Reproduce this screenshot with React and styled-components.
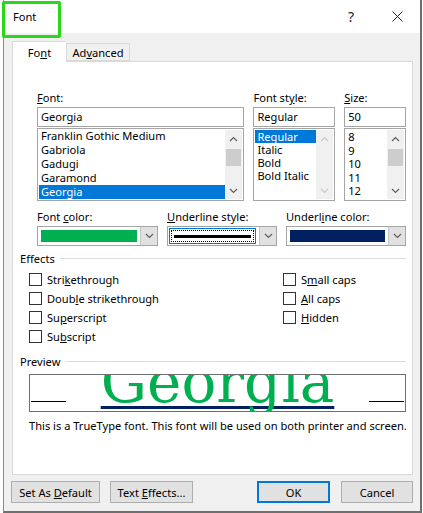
import React from 'react';
import styled, { createGlobalStyle } from 'styled-components';

const GlobalStyle = createGlobalStyle`
  html, body {
    margin: 0;
    padding: 0;
    background: #ffffff;
  }
  body {
    width: 423px;
    height: 513px;
    overflow: hidden;
    font-family: "Noto Sans", "Liberation Sans", sans-serif;
    font-size: 11.1px;
    color: #000;
  }
`;

const Window = styled.div`
  position: relative;
  margin-left: 3px;
  width: 419px;
  height: 513px;
  box-sizing: border-box;
  border-left: 1px solid #8a8a8a;
  border-right: 2px solid #6f6f6f;
  border-bottom: 2px solid #6f6f6f;
  display: flex;
  flex-direction: column;
`;

const TitleBar = styled.div`
  height: 33px;
  background: #fff;
  display: flex;
  align-items: center;
  padding-left: 9px;
`;

const TitleText = styled.div`
  flex: 1;
`;

const TitleButton = styled.div`
  width: 46px;
  height: 33px;
  display: flex;
  align-items: center;
  justify-content: center;
  font-size: 14px;
  color: #222;
`;

const Highlight = styled.div`
  position: absolute;
  left: -2px;
  top: 1px;
  width: 59px;
  height: 37px;
  box-sizing: border-box;
  border: 3px solid #2bd61b;
  border-radius: 2px;
`;

const Body = styled.div`
  flex: 1;
  background: #f0f0f0;
  padding: 8px 7px 0 8px;
  display: flex;
  flex-direction: column;
`;

const Tabs = styled.div`
  display: flex;
  align-items: flex-end;
  height: 20px;
  position: relative;
  z-index: 1;
`;

const Tab = styled.div`
  box-sizing: border-box;
  height: ${p => (p.$active ? '21px' : '18px')};
  margin-bottom: ${p => (p.$active ? '-1px' : '0')};
  width: ${p => p.$w}px;
  background: ${p => (p.$active ? '#fff' : '#f0f0f0')};
  border: 1px solid #d9d9d9;
  border-bottom: ${p => (p.$active ? 'none' : '1px solid #d9d9d9')};
  border-right: ${p => (p.$active ? 'none' : '1px solid #d9d9d9')};
  display: flex;
  align-items: center;
  justify-content: center;
`;

const Panel = styled.div`
  background: #fff;
  border: 1px solid #d9d9d9;
  height: 414px;
  box-sizing: border-box;
  padding: 29px 6px 0 7px;
  display: flex;
  flex-direction: column;
`;

const Ul = styled.span`
  text-decoration: underline;
  text-underline-offset: 1px;
`;

const FieldRow = styled.div`
  display: flex;
  gap: 9px;
  padding-left: 17px;
  margin-top: ${p => p.$top || 0}px;
`;

const Field = styled.div`
  width: ${p => p.$w}px;
  display: flex;
  flex-direction: column;
`;

const Label = styled.div`
  height: 14px;
  line-height: 14px;
  margin-bottom: 2px;
`;

const TextInput = styled.div`
  height: 20px;
  box-sizing: border-box;
  border: 1px solid #a5a5a5;
  padding-left: 3px;
  line-height: 18px;
`;

const ListBox = styled.div`
  height: 73px;
  box-sizing: border-box;
  border: 1px solid #a5a5a5;
  margin-top: 1px;
  display: flex;
  padding: 1px;
`;

const Items = styled.div`
  flex: 1;
  display: flex;
  flex-direction: column;
  justify-content: ${p => (p.$bottom ? 'flex-end' : 'flex-start')};
  overflow: hidden;
`;

const Item = styled.div`
  height: ${p => p.$h || 14}px;
  line-height: ${p => p.$h || 14}px;
  padding-left: 2px;
  flex-shrink: 0;
  white-space: nowrap;
  background: ${p => (p.$sel ? '#0078d7' : 'transparent')};
  color: ${p => (p.$sel ? '#fff' : '#000')};
`;

const ScrollBar = styled.div`
  width: 17px;
  display: flex;
  flex-direction: column;
  background: #f0f0f0;
`;

const ScrollArrow = styled.div`
  height: 17px;
  display: flex;
  align-items: center;
  justify-content: center;
`;

const Track = styled.div`
  flex: 1;
  display: flex;
  flex-direction: column;
`;

const Thumb = styled.div`
  height: 17px;
  background: #cdcdcd;
  margin: 2px 1px 0;
`;

const Combo = styled.div`
  height: 20px;
  box-sizing: border-box;
  border: 1px solid #a5a5a5;
  display: flex;
  background: #fff;
`;

const ComboValue = styled.div`
  flex: 1;
  padding: 3px;
  display: flex;
`;

const Swatch = styled.div`
  flex: 1;
  background: ${p => p.$color};
`;

const FocusBox = styled.div`
  flex: 1;
  border: 1px solid #0078d7;
  display: flex;
  padding: 1px;
  margin: -2px 0 -2px -2px;
`;

const Dotted = styled.div`
  flex: 1;
  border: 1px dotted #000;
  display: flex;
  align-items: center;
  padding: 0 2px;
`;

const Stroke = styled.div`
  flex: 1;
  height: 3px;
  background: #000;
`;

const DropButton = styled.div`
  width: 16px;
  background: #e1e1e1;
  border-left: 1px solid #c4c4c4;
  display: flex;
  align-items: center;
  justify-content: center;
`;

const SectionHead = styled.div`
  display: flex;
  align-items: center;
  gap: 5px;
  height: 15px;
  margin-top: ${p => p.$top}px;
  &::after {
    content: '';
    flex: 1;
    height: 1px;
    background: #dcdcdc;
  }
`;

const Effects = styled.div`
  display: grid;
  grid-template-columns: 254px 1fr;
  grid-auto-rows: 19px;
  padding-left: 9px;
  margin-top: 4px;
`;

const Check = styled.div`
  display: flex;
  align-items: center;
  gap: 5px;
  grid-column: ${p => p.$col};
`;

const Box = styled.span`
  width: 13px;
  height: 13px;
  box-sizing: border-box;
  border: 1px solid #333;
  background: #fff;
`;

const PreviewBox = styled.div`
  margin: 5px 0 0 9px;
  height: 38px;
  box-sizing: border-box;
  border: 1px solid #6f6f6f;
  display: flex;
  align-items: flex-start;
  overflow: hidden;
`;

const SideLine = styled.div`
  width: 35px;
  height: 1px;
  background: #000;
  margin: 26px ${p => p.$mr || 0}px 0 ${p => p.$ml || 0}px;
`;

const PreviewWord = styled.div`
  flex: 1;
  display: flex;
  justify-content: center;
`;

const Georgia = styled.div`
  font-family: "DejaVu Serif", "Liberation Serif", serif;
  font-size: 58px;
  line-height: 58px;
  margin-top: -22px;
  color: #00b050;
  white-space: nowrap;
  text-decoration: underline;
  text-decoration-color: #002060;
  text-decoration-thickness: 3px;
  text-underline-offset: 4px;
  text-decoration-skip-ink: none;
`;

const Note = styled.div`
  padding-left: 9px;
  margin-top: 6px;
  white-space: nowrap;
`;

const Footer = styled.div`
  display: flex;
  align-items: center;
  padding-top: 6px;
  margin-left: -1px;
`;

const Button = styled.div`
  height: 22px;
  width: ${p => p.$w}px;
  box-sizing: border-box;
  background: #e1e1e1;
  border: ${p => (p.$primary ? '2px solid #0078d7' : '1px solid #adadad')};
  display: flex;
  align-items: center;
  justify-content: center;
  margin-left: ${p => p.$ml || 0}px;
`;

const Chevron = ({ up, color = '#606060' }) => (
  <svg width="9" height="6" viewBox="0 0 9 6">
    <path
      d={up ? 'M1 5 L4.5 1.5 L8 5' : 'M1 1 L4.5 4.5 L8 1'}
      fill="none"
      stroke={color}
      strokeWidth="1.2"
    />
  </svg>
);

const Scroll = ({ thumb, disabled }) => {
  const c = disabled ? '#c8c8c8' : '#606060';
  return (
    <ScrollBar>
      <ScrollArrow><Chevron up color={c} /></ScrollArrow>
      <Track>{thumb && <Thumb />}</Track>
      <ScrollArrow><Chevron color={c} /></ScrollArrow>
    </ScrollBar>
  );
};

const fonts = ['Franklin Gothic Medium', 'Gabriola', 'Gadugi', 'Garamond', 'Georgia'];
const styles = ['Regular', 'Italic', 'Bold', 'Bold Italic'];
const sizes = ['8', '9', '10', '11', '12'];

export default function App() {
  return (
    <>
      <GlobalStyle />
      <Window>
        <TitleBar>
          <TitleText>Font</TitleText>
          <TitleButton>?</TitleButton>
          <TitleButton>
            <svg width="11" height="11" viewBox="0 0 11 11">
              <path d="M0.5 0.5 L10.5 10.5 M10.5 0.5 L0.5 10.5" stroke="#222" strokeWidth="1" />
            </svg>
          </TitleButton>
        </TitleBar>
        <Highlight />
        <Body>
          <Tabs>
            <Tab $active $w={54}><span>Fo<Ul>n</Ul>t</span></Tab>
            <Tab $w={64}><span>Ad<Ul>v</Ul>anced</span></Tab>
          </Tabs>
          <Panel>
            <FieldRow>
              <Field $w={208}>
                <Label><Ul>F</Ul>ont:</Label>
                <TextInput>Georgia</TextInput>
                <ListBox>
                  <Items $bottom>
                    {fonts.map(f => (
                      <Item key={f} $sel={f === 'Georgia'}>{f}</Item>
                    ))}
                  </Items>
                  <Scroll thumb />
                </ListBox>
              </Field>
              <Field $w={82}>
                <Label>Font st<Ul>y</Ul>le:</Label>
                <TextInput>Regular</TextInput>
                <ListBox>
                  <Items>
                    {styles.map(s => (
                      <Item key={s} $h={13} $sel={s === 'Regular'}>{s}</Item>
                    ))}
                  </Items>
                  <Scroll disabled />
                </ListBox>
              </Field>
              <Field $w={62}>
                <Label><Ul>S</Ul>ize:</Label>
                <TextInput>50</TextInput>
                <ListBox>
                  <Items>
                    {sizes.map(s => (
                      <Item key={s} $h={13.5}>{s}</Item>
                    ))}
                  </Items>
                  <Scroll thumb />
                </ListBox>
              </Field>
            </FieldRow>

            <FieldRow $top={9}>
              <Field $w={121}>
                <Label>Font <Ul>c</Ul>olor:</Label>
                <Combo>
                  <ComboValue><Swatch $color="#00b050" /></ComboValue>
                  <DropButton><Chevron /></DropButton>
                </Combo>
              </Field>
              <Field $w={110}>
                <Label><Ul>U</Ul>nderline style:</Label>
                <Combo>
                  <ComboValue>
                    <FocusBox><Dotted><Stroke /></Dotted></FocusBox>
                  </ComboValue>
                  <DropButton><Chevron /></DropButton>
                </Combo>
              </Field>
              <Field $w={120}>
                <Label>Underl<Ul>i</Ul>ne color:</Label>
                <Combo>
                  <ComboValue><Swatch $color="#002060" /></ComboValue>
                  <DropButton><Chevron /></DropButton>
                </Combo>
              </Field>
            </FieldRow>

            <SectionHead $top={5}>Effects</SectionHead>
            <Effects>
              <Check $col={1}><Box /><span>Stri<Ul>k</Ul>ethrough</span></Check>
              <Check $col={2}><Box /><span>S<Ul>m</Ul>all caps</span></Check>
              <Check $col={1}><Box /><span>Doub<Ul>l</Ul>e strikethrough</span></Check>
              <Check $col={2}><Box /><span><Ul>A</Ul>ll caps</span></Check>
              <Check $col={1}><Box /><span>Su<Ul>p</Ul>erscript</span></Check>
              <Check $col={2}><Box /><span><Ul>H</Ul>idden</span></Check>
              <Check $col={1}><Box /><span>Su<Ul>b</Ul>script</span></Check>
            </Effects>

            <SectionHead $top={8}>Preview</SectionHead>
            <PreviewBox>
              <SideLine $ml={1} />
              <PreviewWord><Georgia>Georgia</Georgia></PreviewWord>
              <SideLine $mr={1} />
            </PreviewBox>
            <Note>This is a TrueType font. This font will be used on both printer and screen.</Note>
          </Panel>
          <Footer>
            <Button $w={89}><span>Set As <Ul>D</Ul>efault</span></Button>
            <Button $w={83} $ml={10}><span>Text <Ul>E</Ul>ffects...</span></Button>
            <Button $w={73} $ml={64} $primary>OK</Button>
            <Button $w={72} $ml={11}>Cancel</Button>
          </Footer>
        </Body>
      </Window>
    </>
  );
}
